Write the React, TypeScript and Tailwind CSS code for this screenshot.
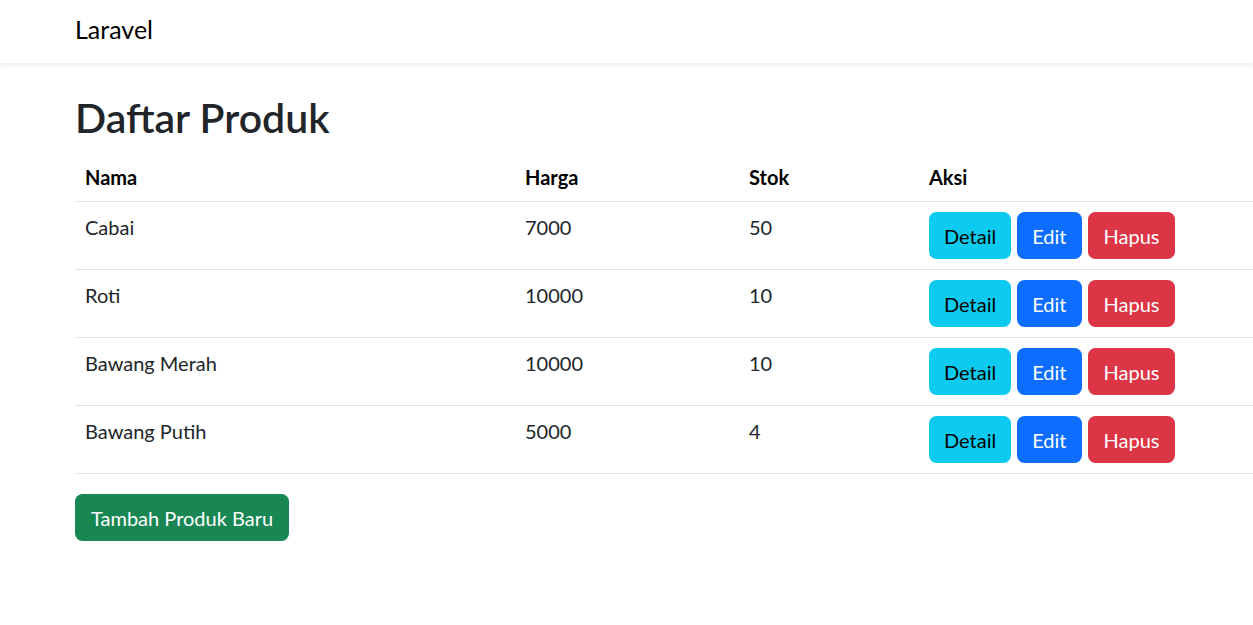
const produk = [
  { nama: "Cabai", harga: 7000, stok: 50 },
  { nama: "Roti", harga: 10000, stok: 10 },
  { nama: "Bawang Merah", harga: 10000, stok: 10 },
  { nama: "Bawang Putih", harga: 5000, stok: 4 },
];

export default function App() {
  return (
    <div
      className="min-h-screen bg-white text-[#212529] overflow-hidden"
      style={{ fontFamily: 'Lato, "Open Sans", sans-serif' }}
    >
      <nav className="h-[63px] bg-white shadow-[0_2.5px_5px_rgba(0,0,0,0.075)] flex items-center pl-[75px] pb-[5px]">
        <a href="#" className="text-[25px] leading-[30px] text-black">
          Laravel
        </a>
      </nav>

      <div className="pl-[75px] pt-[30px]">
        <h1 className="text-[41px] leading-[50px] font-semibold mb-[10px]">Daftar Produk</h1>

        <table className="w-full table-fixed border-collapse text-[20px] leading-[30px] mb-[20px]">
          <colgroup>
            <col className="w-[440px]" />
            <col className="w-[224px]" />
            <col className="w-[180px]" />
            <col />
          </colgroup>
          <thead>
            <tr className="border-b border-[#dee2e6] text-black">
              <th className="text-left font-bold px-[10px] pt-[9px] pb-[9px]">Nama</th>
              <th className="text-left font-bold px-[10px] pt-[9px] pb-[9px]">Harga</th>
              <th className="text-left font-bold px-[10px] pt-[9px] pb-[9px]">Stok</th>
              <th className="text-left font-bold px-[10px] pt-[9px] pb-[9px]">Aksi</th>
            </tr>
          </thead>
          <tbody>
            {produk.map((p) => (
              <tr key={p.nama} className="border-b border-[#dee2e6]">
                <td className="align-top px-[10px] pt-[10px]">{p.nama}</td>
                <td className="align-top px-[10px] pt-[10px]">{p.harga}</td>
                <td className="align-top px-[10px] pt-[10px]">{p.stok}</td>
                <td className="align-top px-[10px] py-[10px]">
                  <div className="flex gap-[6px]">
                    <button className="h-[47px] px-[15px] rounded-[7.5px] bg-[#0dcaf0] text-black">
                      Detail
                    </button>
                    <button className="h-[47px] px-[15px] rounded-[7.5px] bg-[#0d6efd] text-white">
                      Edit
                    </button>
                    <button className="h-[47px] px-[16px] rounded-[7.5px] bg-[#dc3545] text-white">
                      Hapus
                    </button>
                  </div>
                </td>
              </tr>
            ))}
          </tbody>
        </table>

        <button className="h-[47px] px-[16px] rounded-[7.5px] bg-[#198754] text-white text-[20px] leading-[30px]">
          Tambah Produk Baru
        </button>
      </div>
    </div>
  );
}
